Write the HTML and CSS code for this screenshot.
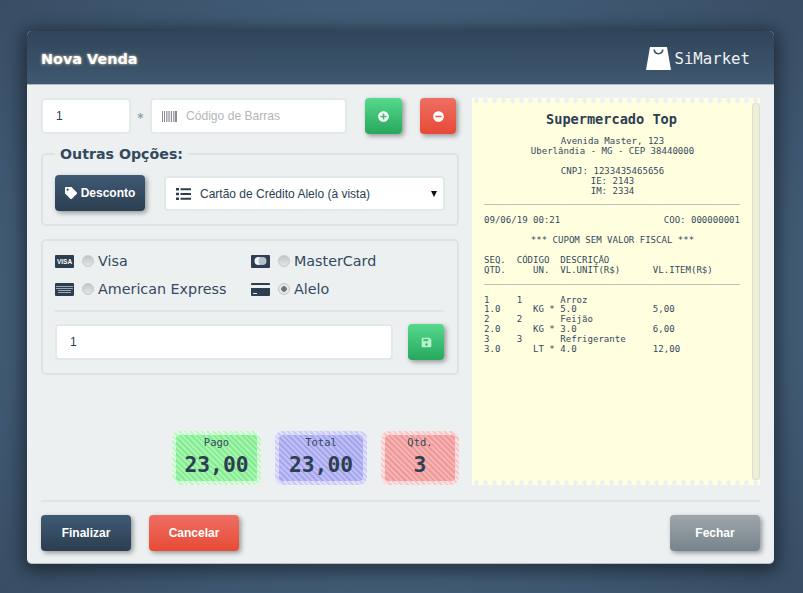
FILE: index.html
```html
<!DOCTYPE html>
<html lang="pt-BR">
<head>
  <meta charset="UTF-8">
  <title>SiMarket - Nova Venda</title>
  <link rel="stylesheet" href="styles.css">
</head>
<body>
  <div class="modal">
    <header class="modal-head">
      <h1>Nova Venda</h1>
      <div class="logo">
        <svg class="logo-bag" viewBox="0 0 25 23"><path fill-rule="evenodd" d="M4 0H21L25 23H0ZM7.5 2.5C7.5 9 17.5 9 17.5 2.5H16C16 7 9 7 9 2.5Z"/></svg>
        <span>SiMarket</span>
      </div>
    </header>

    <div class="modal-body">
      <div class="columns">
        <div class="col-left">
          <div class="row-top">
            <input class="field qty" type="text" value="1">
            <span class="times">*</span>
            <label class="field barcode">
              <svg class="ico-barcode" viewBox="0 0 15 11"><path d="M0 0h1v11H0zM2 0h1v11H2zM4 0h.8v11H4zM5.6 0h1v11h-1zM7.4 0h.8v11h-.8zM9 0h1v11H9zM11 0h.8v11H11zM12.6 0h2.4v11h-2.4z"/></svg>
              <input type="text" placeholder="Código de Barras">
            </label>
            <button class="btn btn-green btn-ico" type="button">
              <svg viewBox="0 0 512 512"><path d="M256 8C119 8 8 119 8 256s111 248 248 248 248-111 248-248S393 8 256 8zm144 276c0 6.6-5.4 12-12 12h-92v92c0 6.6-5.4 12-12 12h-56c-6.6 0-12-5.4-12-12v-92h-92c-6.6 0-12-5.4-12-12v-56c0-6.6 5.4-12 12-12h92v-92c0-6.6 5.4-12 12-12h56c6.6 0 12 5.4 12 12v92h92c6.6 0 12 5.4 12 12v56z"/></svg>
            </button>
            <button class="btn btn-red btn-ico" type="button">
              <svg viewBox="0 0 512 512"><path d="M256 8C119 8 8 119 8 256s111 248 248 248 248-111 248-248S393 8 256 8zM124 296c-6.6 0-12-5.4-12-12v-56c0-6.6 5.4-12 12-12h264c6.6 0 12 5.4 12 12v56c0 6.6-5.4 12-12 12H124z"/></svg>
            </button>
          </div>

          <fieldset class="box options">
            <legend>Outras Opções:</legend>
            <button class="btn btn-dark btn-desc" type="button">
              <svg viewBox="0 0 512 512"><path fill-rule="evenodd" d="M0 252V48C0 21.5 21.5 0 48 0h204c12.7 0 24.9 5.1 33.9 14.1l211.9 211.9c18.7 18.7 18.7 49.1 0 67.9L293.900 497.900c-18.700 18.700-49.100 18.700-67.900 0L14.100 286C5.100 277 0 264.700 0 252zM112 64a48 48 0 1 0 0 96 48 48 0 0 0 0-96z"/></svg>
              Desconto
            </button>
            <div class="field pay-select">
              <svg class="ico-list" viewBox="0 0 15 12"><path d="M0 0h3v2.500H0zM0 4.750h3v2.500H0zM0 9.500h3V12H0zM4.500 .2H15v2H4.500zM4.500 5H15v2H4.500zM4.500 9.800H15v2H4.500z"/></svg>
              <span>Cartão de Crédito Alelo (à vista)</span>
              <i class="caret"></i>
            </div>
          </fieldset>

          <div class="box cards">
            <div class="card-grid">
              <label class="card-opt">
                <svg class="ico-card" viewBox="0 0 19 13"><rect width="19" height="13" rx="1"/><text class="visa-text" x="9.500" y="9">VISA</text></svg>
                <input type="radio" name="card">
                Visa
              </label>
              <label class="card-opt">
                <svg class="ico-card" viewBox="0 0 19 13"><rect width="19" height="13" rx="1"/><circle class="mc-left" cx="7.500" cy="6" r="4"/><circle class="mc-right" cx="11.500" cy="6" r="4"/></svg>
                <input type="radio" name="card">
                MasterCard
              </label>
              <label class="card-opt">
                <svg class="ico-card" viewBox="0 0 19 13"><rect width="19" height="13" rx="1"/><path class="amex-lines" d="M1 3h17v1H1zM1 5h17v1H1zM3 7h13v1H3zM3 9h13v1H3z"/></svg>
                <input type="radio" name="card">
                American Express
              </label>
              <label class="card-opt">
                <svg class="ico-card" viewBox="0 0 19 13"><path d="M1 0h17a1 1 0 0 1 1 1v1H0V1a1 1 0 0 1 1-1zM0 5h19v7a1 1 0 0 1-1 1H1a1 1 0 0 1-1-1zM2 10v1h4v-1z" fill-rule="evenodd"/></svg>
                <input type="radio" name="card" checked>
                Alelo
              </label>
            </div>
            <hr class="sep">
            <div class="pay-row">
              <input class="field pay-value" type="text" value="1">
              <button class="btn btn-green btn-ico" type="button">
                <svg viewBox="0 0 448 512"><path fill-rule="evenodd" d="M48 32h288c12.700 0 25 5 34 14l64 64c9 9 14 21.300 14 34v288c0 26.500-21.500 48-48 48H48c-26.500 0-48-21.500-48-48V80c0-26.500 21.500-48 48-48zM224 416a64 64 0 1 0 0-128 64 64 0 0 0 0 128zM80 96v96h224V96z"/></svg>
              </button>
            </div>
          </div>

          <div class="stats">
            <div class="stat stat-green"><div class="stat-in"><small>Pago</small><b>23,00</b></div></div>
            <div class="stat stat-blue"><div class="stat-in"><small>Total</small><b>23,00</b></div></div>
            <div class="stat stat-red"><div class="stat-in"><small>Qtd.</small><b>3</b></div></div>
          </div>
        </div>

        <div class="receipt">
          <div class="perf"></div>
          <div class="receipt-main">
            <div class="paper">
              <h2>Supermercado Top</h2>
<pre class="center">Avenida Master, 123
Uberlândia - MG - CEP 38440000

CNPJ: 1233435465656
IE: 2143
IM: 2334</pre>
<pre>_______________________________________________

09/06/19 00:21                   COO: 000000001

</pre>
<pre class="center">*** CUPOM SEM VALOR FISCAL ***

</pre>
<pre>SEQ.  CÓDIGO  DESCRIÇÃO
QTD.     UN.  VL.UNIT(R$)      VL.ITEM(R$)
_______________________________________________

1     1       Arroz
1.0      KG * 5.0              5,00
2     2       Feijão
2.0      KG * 3.0              6,00
3     3       Refrigerante
3.0      LT * 4.0              12,00</pre>
            </div>
            <div class="scroll-thumb"></div>
          </div>
          <div class="perf"></div>
        </div>
      </div>

      <footer class="modal-foot">
        <button class="btn btn-dark" type="button">Finalizar</button>
        <button class="btn btn-red" type="button">Cancelar</button>
        <button class="btn btn-gray foot-right" type="button">Fechar</button>
      </footer>
    </div>
  </div>
</body>
</html>
```

FILE: styles.css
```css
* { box-sizing: border-box; }
html, body { height: 100%; margin: 0; }
body { background: radial-gradient(ellipse at 50% 50%, #56789a 0%, #4a6a88 45%, #3e566f 78%, #384e65 100%); overflow: hidden; padding: 31px 29px 29px 27px; font-family: "Liberation Sans", Arial, sans-serif; color: #34495e; }

.modal { height: 533px; background: #ecf0f1; border-radius: 5px; box-shadow: 0 3px 18px 5px rgba(0,0,0,.45); border-bottom: 1px solid #b5bcbf; overflow: hidden; }
.modal-head { height: 54px; padding: 2px 24px 0 14px; display: flex; align-items: center; justify-content: space-between; background: linear-gradient(#30455a, #3f5870); border-bottom: 1px solid #a9b8c4; }
.modal-head h1 { margin: 0; font: bold 14.400px "DejaVu Sans", sans-serif; color: #fff; text-shadow: 0 0 3px #f3e6c0; }
.logo { display: flex; align-items: center; gap: 3px; margin-top: -1px; color: #ecf0f1; font: 15.700px "DejaVu Sans Mono", monospace; }
.logo-bag { width: 25px; height: 23px; fill: #fff; }

.modal-body { height: 478px; padding: 13px 14px 0; }
.columns { display: flex; justify-content: space-between; height: 387px; }
.col-left { width: 418px; display: flex; flex-direction: column; }

.field { height: 36px; background: #fff; border: 2px solid #e2e9e9; border-radius: 4px; font: 12px "Liberation Sans", sans-serif; color: #2c3e50; }
input.field { padding: 0 13px; outline: none; }

.row-top { display: flex; align-items: center; }
.qty { width: 90px; }
.times { width: 19px; padding-top: 4px; text-align: center; font: bold 12px "DejaVu Sans", sans-serif; color: #8ca0ab; }
.barcode { width: 197px; display: flex; align-items: center; padding: 0 10px; margin-right: 18px; }
.barcode input { flex: 1; width: 10px; margin-left: 9px; border: 0; outline: none; padding: 0; font: 12.100px "Liberation Sans", sans-serif; }
.barcode input::placeholder { color: #b1b6b9; }
.ico-barcode { width: 15px; height: 11px; fill: #8e8a9a; }

.btn { height: 36px; border: 0; border-radius: 4px; padding: 0; color: #fff; font: bold 12px "Liberation Sans", sans-serif; width: 90px; box-shadow: 2px 2px 5px rgba(0,0,0,.38); }
.btn-ico { width: 37px; display: flex; align-items: center; justify-content: center; }
.btn-ico svg { width: 11px; height: 11px; fill: #fff; }
.row-top .btn-ico + .btn-ico { margin-left: 18px; width: 36px; }
.btn-green { background: linear-gradient(#55d98d, #27a85c); }
.btn-red { background: linear-gradient(#ee6f63, #e74a36); }
.btn-dark { background: linear-gradient(#3f5a75, #2c3e50); }
.btn-gray { background: linear-gradient(#9ea6ab, #77848c); }

.box { border: 2px solid #dbe3e3; border-radius: 5px; margin: 0; }
.options { margin-top: 11px; height: 81px; padding: 12px 12px 0; display: flex; gap: 19px; align-items: flex-start; }
.options legend { margin-left: 0; padding: 0 5px; font: bold 14.200px/18px "DejaVu Sans", sans-serif; color: #34495e; }
.btn-desc { flex: none; display: flex; align-items: center; justify-content: center; gap: 4px; }
.btn-desc svg { width: 12px; height: 12px; fill: #fff; }
.pay-select { flex: 1; height: 35px; margin-top: 1px; display: flex; align-items: center; padding: 0 6px 0 10px; color: #2c3e50; }
.ico-list { width: 15px; height: 12px; fill: #2c3e50; margin-right: 9px; }
.pay-select span { flex: 1; }
.caret { width: 0; height: 0; border: 3px solid transparent; border-top: 6px solid #111; border-bottom: 0; }

.cards { margin-top: 13px; height: 136px; padding: 6px 13px 0 12px; }
.card-grid { display: grid; grid-template-columns: 196px 1fr; grid-auto-rows: 28px; }
.card-opt { display: flex; align-items: center; font: 14.300px "DejaVu Sans", sans-serif; color: #34495e; }
.ico-card { width: 19px; height: 13px; margin-right: 8px; fill: #2c3e50; }
.visa-text { font: bold 6.500px "Liberation Sans", sans-serif; fill: #fff; text-anchor: middle; }
.mc-left { fill: #f2f4f8; }
.mc-right { fill: #b8c0cb; }
.amex-lines { fill: #9aa6b2; }
.card-opt input { appearance: none; margin: 0 4px 0 0; width: 12px; height: 12px; border-radius: 50%; border: 1px solid #c4c8ca; background: linear-gradient(#c2c6c8, #e3e6e7); }
.card-opt input:checked { background: radial-gradient(circle, #6f7579 2.500px, #e3e6e7 3px); }

.sep { margin: 7px 0 12px; border: 0; border-top: 2px solid #dde5e5; }
.pay-row { display: flex; justify-content: space-between; }
.pay-value { width: 338px; }
.pay-row .btn-ico { width: 36px; }
.pay-row .btn-ico svg { fill: #b9f2cd; }

.stats { margin-top: auto; display: grid; grid-template-columns: 89px 92px 78px; gap: 14px; justify-content: end; }
.stat { height: 54px; padding: 4px; border-radius: 8px; }
.stat-in { height: 100%; border-radius: 4px; display: flex; flex-direction: column; align-items: center; }
.stat small { font: 10.500px/15px "DejaVu Sans Mono", monospace; color: #34495e; }
.stat b { margin-top: 3px; font: bold 21.300px/23px "DejaVu Sans Mono", monospace; color: #2c3e50; }
.stat-green { background: repeating-linear-gradient(45deg, #e0fce4 0 2px, #bdf8c5 2px 4px); }
.stat-green .stat-in { background: repeating-linear-gradient(45deg, #a8f5b1 0 2px, #84ec90 2px 4px); }
.stat-blue { background: repeating-linear-gradient(45deg, #e2e2fc 0 2px, #cbcbf9 2px 4px); }
.stat-blue .stat-in { background: repeating-linear-gradient(45deg, #bfbff6 0 2px, #a6a6ef 2px 4px); }
.stat-red { background: repeating-linear-gradient(45deg, #fce2e2 0 2px, #f9c8c8 2px 4px); }
.stat-red .stat-in { background: repeating-linear-gradient(45deg, #f6b3b3 0 2px, #ef9898 2px 4px); }

.receipt { width: 288px; display: flex; flex-direction: column; }
.perf { height: 5px; background: radial-gradient(circle at 4.500px 2.500px, #ecf0f1 2px, #ffffe0 2.800px) 0 0 / 9px 5px; }
.receipt-main { flex: 1; display: flex; }
.paper { flex: 1; background: #ffffe0; padding: 8px 0 0 12px; font: 9.050px/9.900px "DejaVu Sans Mono", monospace; color: #34495e; }
.paper h2 { margin: 0 13px 0 0; text-align: center; font: bold 13.600px/16px "DejaVu Sans Mono", monospace; color: #2c3e50; padding-bottom: 10px; }
.paper pre { margin: 0; font: inherit; white-space: pre; }
.paper .center { text-align: center; width: 257px; }
.scroll-thumb { width: 8px; background: #efefd8; border: 1px solid #dedfc9; border-radius: 4px; }

.modal-foot { margin-top: 15px; border-top: 2px solid #dde5e5; padding-top: 13px; display: flex; gap: 18px; }
.foot-right { margin-left: auto; }
```
